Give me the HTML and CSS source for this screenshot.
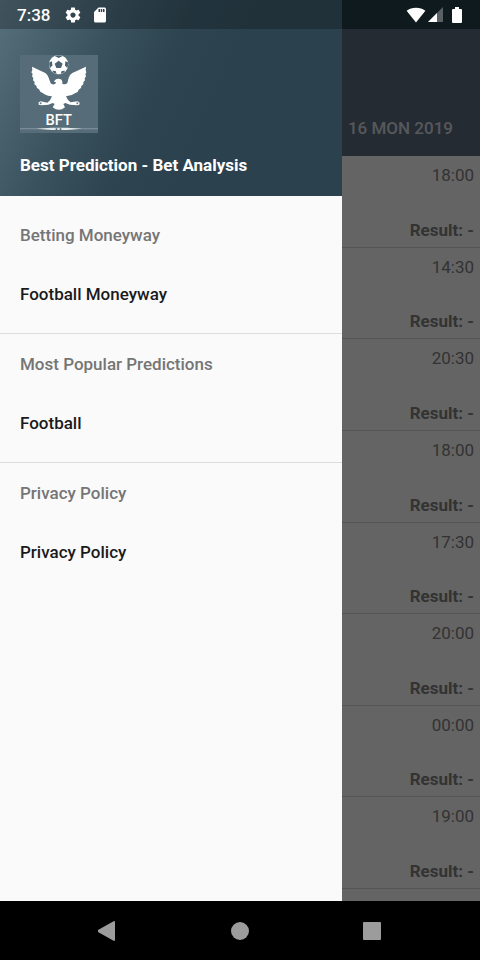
FILE: index.html
```html
<!DOCTYPE html>
<html lang="en">
<head>
  <meta charset="UTF-8">
  <meta name="viewport" content="width=device-width, initial-scale=1.0">
  <title>Best Prediction - Bet Analysis</title>
  <link rel="stylesheet" href="styles.css">
</head>
<body>
  <div class="app">
    <main class="page">
      <div class="toolbar"></div>
      <div class="date-tab">16 MON 2019</div>
      <ul class="matches">
        <li class="match"><span>18:00</span><b>Result: -</b></li>
        <li class="match"><span>14:30</span><b>Result: -</b></li>
        <li class="match"><span>20:30</span><b>Result: -</b></li>
        <li class="match"><span>18:00</span><b>Result: -</b></li>
        <li class="match"><span>17:30</span><b>Result: -</b></li>
        <li class="match"><span>20:00</span><b>Result: -</b></li>
        <li class="match"><span>00:00</span><b>Result: -</b></li>
        <li class="match"><span>19:00</span><b>Result: -</b></li>
      </ul>
    </main>

    <div class="scrim"></div>

    <aside class="drawer">
      <header class="drawer-header">
        <svg class="logo" viewBox="30 30 234 234" aria-hidden="true">
          <rect x="30" y="30" width="234" height="234" fill="#566d79"/>
          <!-- ball -->
          <circle cx="146" cy="59" r="29" fill="#fff"/>
          <g fill="#4d636f">
            <path d="M146 47l12 9-5 13h-14l-5-13z"/>
            <path d="M134 33q12-5 24 0l-12 6z"/>
            <path d="M118 52l8-3 1 12-7 9q-4-9-2-18z"/>
            <path d="M174 52l-8-3-1 12 7 9q4-9 2-18z"/>
            <path d="M126 77l11 1 3 9q-9-2-14-10z"/>
            <path d="M166 77l-11 1-3 9q9-2 14-10z"/>
          </g>
          <!-- eagle -->
          <path fill="#fff" d="M66 65L106 84Q113 89 116 98L122 115Q128 121 136 116L138 111L132 111Q134 102 145 101Q156 101 157 110L157 116Q166 121 172 114L176 98Q180 88 187 84L228 65L227 75L229 82L226 88L228 94L224 100L225 106L220 112L220 118L214 123L213 129L206 134L203 141L195 145Q185 153 168 154L174 165L182 172L203 169L209 173L208 179L201 181L180 179L166 174L160 177L165 187Q147 202 128 187L134 177L128 174L115 179L95 181L86 179L86 172L92 169L112 173L120 166L126 154Q108 153 98 144L91 140L87 133L81 129L79 122L73 118L74 111L69 106L70 99L66 94L68 87L64 82L67 76z"/>
          <g fill="#6c818c">
            <circle cx="92" cy="175" r="3"/>
            <circle cx="202" cy="175" r="3"/>
          </g>
          <text class="logo-text" x="146" y="241" text-anchor="middle">BFT</text>
          <path d="M30 250H264V253H30z" fill="#8496a0"/>
          <path d="M80 251L125 248H171L216 251L171 255H125z" fill="#e6ebed"/>
          <path d="M137 250h5v5h-5zM149 250h5v5h-5z" fill="#566d79"/>
        </svg>
        <h1 class="drawer-title">Best Prediction - Bet Analysis</h1>
      </header>
      <nav class="menu">
        <section class="menu-group">
          <h2 class="menu-heading">Betting Moneyway</h2>
          <a class="menu-link" href="#">Football Moneyway</a>
        </section>
        <section class="menu-group">
          <h2 class="menu-heading">Most Popular Predictions</h2>
          <a class="menu-link" href="#">Football</a>
        </section>
        <section class="menu-group">
          <h2 class="menu-heading">Privacy Policy</h2>
          <a class="menu-link" href="#">Privacy Policy</a>
        </section>
      </nav>
    </aside>

    <div class="status-bar">
      <span class="clock">7:38</span>
      <svg class="gear" width="18" height="18" viewBox="0 0 24 24" fill="#fff"><path d="M19.43 12.98c.04-.32.07-.64.07-.98s-.03-.66-.07-.98l2.11-1.65c.19-.15.24-.42.12-.64l-2-3.46c-.12-.22-.39-.3-.61-.22l-2.49 1c-.52-.4-1.08-.73-1.69-.98l-.38-2.65C14.46 2.18 14.25 2 14 2h-4c-.25 0-.46.18-.49.42l-.38 2.65c-.61.25-1.17.59-1.69.98l-2.49-1c-.23-.09-.49 0-.61.22l-2 3.46c-.13.22-.07.49.12.64l2.11 1.65c-.04.32-.07.65-.07.98s.03.66.07.98l-2.11 1.65c-.19.15-.24.42-.12.64l2 3.46c.12.22.39.3.61.22l2.49-1c.52.4 1.08.73 1.69.98l.38 2.65c.03.24.24.42.49.42h4c.25 0 .46-.18.49-.42l.38-2.65c.61-.25 1.17-.59 1.69-.98l2.49 1c.23.09.49 0 .61-.22l2-3.46c.12-.22.07-.49-.12-.64l-2.11-1.65zM12 15.5c-1.93 0-3.5-1.57-3.5-3.5s1.57-3.5 3.5-3.5 3.5 1.57 3.5 3.5-1.57 3.5-3.5 3.5z"/></svg>
      <svg class="card" width="18" height="18" viewBox="0 0 24 24" fill="#fff"><path d="M18 2h-8L4.020 8 4 20c0 1.100.9 2 2 2h12c1.100 0 2-.9 2-2V4c0-1.100-.9-2-2-2zm-6 6h-2V4h2v4zm3 0h-2V4h2v4zm3 0h-2V4h2v4z"/></svg>
      <div class="signals">
        <svg width="20" height="16" viewBox="0 0 20 16" fill="#fff"><path d="M10 15.500L.6 3.800C5.500-.3 14.500-.3 19.400 3.800z"/></svg>
        <svg width="16" height="16" viewBox="0 0 16 16"><path d="M15 0v15H0z" fill="#596165"/><path d="M9 6v9H0z" fill="#fff"/></svg>
        <svg class="battery" width="10" height="16" viewBox="0 0 10 16" fill="#fff"><path d="M3 0h4v2h2q1 0 1 1v12q0 1-1 1H1q-1 0-1-1V3q0-1 1-1h2z"/></svg>
      </div>
    </div>
  </div>

  <div class="nav-bar">
    <button class="nav-button" type="button" aria-label="Back">
      <svg width="20" height="20" viewBox="0 0 20 20"><path d="M16 0q1 0 1 1v18q0 1-1 1L0 11q-1-1 0-2z"/></svg>
    </button>
    <button class="nav-button" type="button" aria-label="Home">
      <svg width="20" height="20" viewBox="0 0 20 20"><circle cx="10" cy="10" r="9"/></svg>
    </button>
    <button class="nav-button" type="button" aria-label="Recent apps">
      <svg width="20" height="20" viewBox="0 0 20 20"><rect x="1" y="1" width="18" height="18" rx="1"/></svg>
    </button>
  </div>
</body>
</html>
```
FILE: styles.css
```css
* {
  box-sizing: border-box;
}
body {
  margin: 0;
  height: 100vh;
  display: flex;
  flex-direction: column;
  font-family: Roboto, sans-serif;
  font-size: 17px;
  line-height: 20px;
}
.app {
  position: relative;
  flex: 1;
  min-height: 0;
  overflow: hidden;
}

/* match list behind the drawer */
.page {
  height: 100%;
  display: flex;
  flex-direction: column;
  padding-top: 29px;
  background: #355764;
}
.toolbar {
  height: 69px;
  background: #5c6b7f;
}
.date-tab {
  height: 58px;
  padding: 20px 27px;
  background: #5c6b7f;
  color: #d8dce0;
  font-weight: 500;
  text-align: right;
}
.matches {
  flex: 1;
  display: grid;
  grid-template-rows: repeat(8, 1fr);
  margin: 0;
  padding: 0 0 12px;
  list-style: none;
  background: #fafafa;
  color: #808080;
}
.match {
  display: flex;
  flex-direction: column;
  justify-content: space-between;
  padding: 9px 6px 7px;
  border-bottom: 1px solid #d4d4d4;
  text-align: right;
}
.scrim {
  position: absolute;
  inset: 0;
  background: rgba(0, 0, 0, 0.6);
}

/* drawer */
.drawer {
  position: absolute;
  top: 0;
  bottom: 0;
  left: 0;
  width: calc(100% - 138px);
  background: #fafafa;
}
.drawer-header {
  padding: 55px 20px 21px;
  background: linear-gradient(115deg, #56707c 0%, #3a525e 28%, #2e4551 45%, #2b424e 60%);
}
.logo {
  display: block;
  width: 78px;
  height: 78px;
}
.logo-text {
  font-size: 44px;
  font-weight: 500;
  fill: #fff;
}
.drawer-title {
  margin: 22px 0 0;
  color: #fff;
  font-size: 17px;
  font-weight: 700;
}
.menu {
  padding-top: 9px;
}
.menu-group {
  padding: 20px 20px 29px;
  border-bottom: 1px solid #dcdcdc;
}
.menu-group:last-child {
  border-bottom: none;
}
.menu-heading {
  margin: 0 0 39px;
  color: #757575;
  font-size: 17px;
  font-weight: 500;
}
.menu-link {
  display: block;
  color: #1a1a1a;
  font-weight: 500;
  text-decoration: none;
}

/* system bars */
.status-bar {
  position: absolute;
  top: 0;
  left: 0;
  right: 0;
  height: 29px;
  display: flex;
  align-items: center;
  padding: 0 18px 0 17px;
  background: rgba(0, 0, 0, 0.25);
  color: #fff;
  font-weight: 500;
}
.clock {
  width: 47px;
}
.card {
  margin-left: 9px;
}
.signals {
  display: flex;
  gap: 2px;
  margin-left: auto;
}
.battery {
  margin-left: 6px;
}
.nav-bar {
  height: 59px;
  display: flex;
  justify-content: center;
  background: #000;
}
.nav-button {
  width: 132px;
  padding: 0;
  border: none;
  background: none;
  fill: #9c9c9c;
}
.nav-button svg {
  display: block;
  margin: 0 auto;
}
```
